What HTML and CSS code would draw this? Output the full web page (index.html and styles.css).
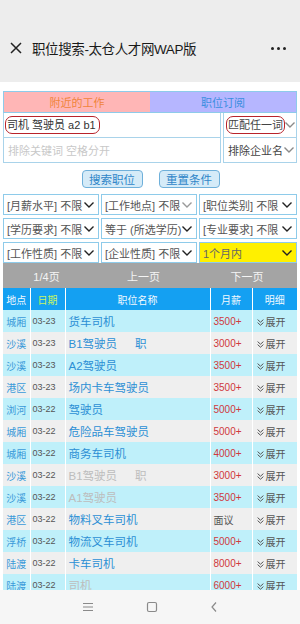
FILE: index.html
```html
<!DOCTYPE html>
<html lang="zh-CN">
<head>
<meta charset="utf-8">
<title>职位搜索-太仓人才网WAP版</title>
<link rel="stylesheet" href="styles.css">
</head>
<body>
<header class="topbar">
  <svg class="close" width="12" height="12" viewBox="0 0 12 12"><path d="M1 1L11 11M11 1L1 11" stroke="#222" stroke-width="1.5" fill="none"/></svg>
  <span class="title">职位搜索-太仓人才网WAP版</span>
  <span class="more"><i></i><i></i><i></i></span>
</header>

<main class="page">
  <nav class="tabs">
    <div class="tab tab-near">附近的工作</div>
    <div class="tab tab-sub">职位订阅</div>
  </nav>

  <section class="search">
    <div class="field"><span class="ring">司机 驾驶员 a2 b1</span></div>
    <div class="sel light"><span class="ring">匹配任一词</span><svg class="chev" viewBox="0 0 10 6"><path d="M0.5 0.5L5 5L9.5 0.5"/></svg></div>
    <div class="field placeholder">排除关键词 空格分开</div>
    <div class="sel light"><span>排除企业名</span><svg class="chev" viewBox="0 0 10 6"><path d="M0.5 0.5L5 5L9.5 0.5"/></svg></div>
  </section>

  <div class="buttons">
    <span class="btn">搜索职位</span>
    <span class="btn">重置条件</span>
  </div>

  <section class="filters">
    <div class="fsel"><span>[月薪水平] 不限</span><svg class="chev" viewBox="0 0 10 6"><path d="M0.5 0.5L5 5L9.5 0.5"/></svg></div>
    <div class="fsel faint"><span>[工作地点] 不限</span><svg class="chev" viewBox="0 0 10 6"><path d="M0.5 0.5L5 5L9.5 0.5"/></svg></div>
    <div class="fsel"><span>[职位类别] 不限</span><svg class="chev" viewBox="0 0 10 6"><path d="M0.5 0.5L5 5L9.5 0.5"/></svg></div>
    <div class="fsel"><span>[学历要求] 不限</span><svg class="chev" viewBox="0 0 10 6"><path d="M0.5 0.5L5 5L9.5 0.5"/></svg></div>
    <div class="fsel"><span>等于 (所选学历)</span><svg class="chev" viewBox="0 0 10 6"><path d="M0.5 0.5L5 5L9.5 0.5"/></svg></div>
    <div class="fsel"><span>[专业要求] 不限</span><svg class="chev" viewBox="0 0 10 6"><path d="M0.5 0.5L5 5L9.5 0.5"/></svg></div>
    <div class="fsel"><span>[工作性质] 不限</span><svg class="chev" viewBox="0 0 10 6"><path d="M0.5 0.5L5 5L9.5 0.5"/></svg></div>
    <div class="fsel"><span>[企业性质] 不限</span><svg class="chev" viewBox="0 0 10 6"><path d="M0.5 0.5L5 5L9.5 0.5"/></svg></div>
    <div class="fsel yellow"><span>1个月内</span><svg class="chev" viewBox="0 0 10 6"><path d="M0.5 0.5L5 5L9.5 0.5"/></svg></div>
  </section>

  <div class="pager">
    <span>1/4页</span>
    <span>上一页</span>
    <span>下一页</span>
  </div>

  <table class="jobs">
    <thead>
      <tr><th>地点</th><th class="hdate">日期</th><th>职位名称</th><th>月薪</th><th>明细</th></tr>
    </thead>
    <tbody>
      <tr class="c"><td class="loc">城厢</td><td class="date">03-23</td><td class="name">货车司机</td><td class="pay">3500+</td><td class="more-c"><svg class="dbl" viewBox="0 0 7 7"><path d="M0.6 0.6L3.5 3.2L6.4 0.6M0.6 3.6L3.5 6.2L6.4 3.6"/></svg>展开</td></tr>
      <tr class="g"><td class="loc">沙溪</td><td class="date">03-23</td><td class="name">B1驾驶员<span class="gap">职</span></td><td class="pay">3000+</td><td class="more-c"><svg class="dbl" viewBox="0 0 7 7"><path d="M0.6 0.6L3.5 3.2L6.4 0.6M0.6 3.6L3.5 6.2L6.4 3.6"/></svg>展开</td></tr>
      <tr class="c"><td class="loc">沙溪</td><td class="date">03-23</td><td class="name">A2驾驶员</td><td class="pay">3500+</td><td class="more-c"><svg class="dbl" viewBox="0 0 7 7"><path d="M0.6 0.6L3.5 3.2L6.4 0.6M0.6 3.6L3.5 6.2L6.4 3.6"/></svg>展开</td></tr>
      <tr class="g"><td class="loc">港区</td><td class="date">03-23</td><td class="name">场内卡车驾驶员</td><td class="pay">3500+</td><td class="more-c"><svg class="dbl" viewBox="0 0 7 7"><path d="M0.6 0.6L3.5 3.2L6.4 0.6M0.6 3.6L3.5 6.2L6.4 3.6"/></svg>展开</td></tr>
      <tr class="c"><td class="loc">浏河</td><td class="date">03-22</td><td class="name">驾驶员</td><td class="pay">5000+</td><td class="more-c"><svg class="dbl" viewBox="0 0 7 7"><path d="M0.6 0.6L3.5 3.2L6.4 0.6M0.6 3.6L3.5 6.2L6.4 3.6"/></svg>展开</td></tr>
      <tr class="g"><td class="loc">城厢</td><td class="date">03-22</td><td class="name">危险品车驾驶员</td><td class="pay">5000+</td><td class="more-c"><svg class="dbl" viewBox="0 0 7 7"><path d="M0.6 0.6L3.5 3.2L6.4 0.6M0.6 3.6L3.5 6.2L6.4 3.6"/></svg>展开</td></tr>
      <tr class="c"><td class="loc">城厢</td><td class="date">03-22</td><td class="name">商务车司机</td><td class="pay">4000+</td><td class="more-c"><svg class="dbl" viewBox="0 0 7 7"><path d="M0.6 0.6L3.5 3.2L6.4 0.6M0.6 3.6L3.5 6.2L6.4 3.6"/></svg>展开</td></tr>
      <tr class="g"><td class="loc">沙溪</td><td class="date">03-22</td><td class="name old">B1驾驶员<span class="gap">职</span></td><td class="pay">3000+</td><td class="more-c"><svg class="dbl" viewBox="0 0 7 7"><path d="M0.6 0.6L3.5 3.2L6.4 0.6M0.6 3.6L3.5 6.2L6.4 3.6"/></svg>展开</td></tr>
      <tr class="c"><td class="loc">沙溪</td><td class="date">03-22</td><td class="name old">A1驾驶员</td><td class="pay">3500+</td><td class="more-c"><svg class="dbl" viewBox="0 0 7 7"><path d="M0.6 0.6L3.5 3.2L6.4 0.6M0.6 3.6L3.5 6.2L6.4 3.6"/></svg>展开</td></tr>
      <tr class="g"><td class="loc">港区</td><td class="date">03-22</td><td class="name">物料叉车司机</td><td class="pay nego">面议</td><td class="more-c"><svg class="dbl" viewBox="0 0 7 7"><path d="M0.6 0.6L3.5 3.2L6.4 0.6M0.6 3.6L3.5 6.2L6.4 3.6"/></svg>展开</td></tr>
      <tr class="c"><td class="loc">浮桥</td><td class="date">03-22</td><td class="name">物流叉车司机</td><td class="pay">5000+</td><td class="more-c"><svg class="dbl" viewBox="0 0 7 7"><path d="M0.6 0.6L3.5 3.2L6.4 0.6M0.6 3.6L3.5 6.2L6.4 3.6"/></svg>展开</td></tr>
      <tr class="g"><td class="loc">陆渡</td><td class="date">03-22</td><td class="name">卡车司机</td><td class="pay">8000+</td><td class="more-c"><svg class="dbl" viewBox="0 0 7 7"><path d="M0.6 0.6L3.5 3.2L6.4 0.6M0.6 3.6L3.5 6.2L6.4 3.6"/></svg>展开</td></tr>
      <tr class="c"><td class="loc">陆渡</td><td class="date">03-22</td><td class="name old">司机</td><td class="pay">6000+</td><td class="more-c"><svg class="dbl" viewBox="0 0 7 7"><path d="M0.6 0.6L3.5 3.2L6.4 0.6M0.6 3.6L3.5 6.2L6.4 3.6"/></svg>展开</td></tr>
    </tbody>
  </table>
</main>

<footer class="navbar">
  <svg class="nav-ico" width="12" height="10" viewBox="0 0 12 10"><path d="M1 1.5H11M1 5H11M1 8.5H11" stroke="#8a8a8a" stroke-width="1.1" fill="none"/></svg>
  <svg class="nav-ico" width="12" height="12" viewBox="0 0 12 12"><rect x="1.5" y="1.5" width="9" height="9" rx="1.5" stroke="#8a8a8a" stroke-width="1.2" fill="none"/></svg>
  <svg class="nav-ico" width="8" height="12" viewBox="0 0 8 12"><path d="M6 1.5L2 6L6 10.5" stroke="#8a8a8a" stroke-width="1.2" fill="none"/></svg>
</footer>
</body>
</html>
```

FILE: styles.css
```css
* { box-sizing: border-box; }
html, body { margin: 0; padding: 0; }
body {
  width: 300px;
  height: 624px;
  overflow: hidden;
  background: #fff;
  font-family: "Liberation Sans", "Noto Sans CJK SC", sans-serif;
  color: #333;
}

.topbar {
  height: 82px;
  background: #ededed;
  display: flex;
  align-items: center;
  padding: 14px 14px 0 10px;
}
.close { flex: none; }
.title {
  margin-left: 10px;
  font-size: 13.5px;
  color: #1a1a1a;
  flex: 1;
  letter-spacing: -0.4px;
}
.more { display: flex; gap: 3px; }
.more i { width: 3px; height: 3px; border-radius: 50%; background: #222; display: block; }

.page { padding: 9px 3px 0; }

.tabs {
  display: grid;
  grid-template-columns: 1fr 1fr;
  height: 22px;
  border: 1px solid #8ecbea;
  font-size: 11px;
}
.tab { display: flex; align-items: center; justify-content: center; }
.tab-near { background: #ffb6b6; color: #f0843a; }
.tab-sub { background: #b6b6ff; color: #3a8ee0; }

.search {
  display: grid;
  grid-template-columns: 218px 1fr;
  grid-auto-rows: 25px;
  column-gap: 2px;
  font-size: 11px;
}
.field {
  border: 1px solid #a9d3ea;
  border-top: none;
  display: flex;
  align-items: center;
  padding-left: 1px;
  color: #333;
  white-space: nowrap;
}
.placeholder { color: #c8c8c8; padding-left: 4px; }
.ring {
  border: 1.3px solid #b8232b;
  border-radius: 7px;
  padding: 1px 3px 1px 1px;
  line-height: 14px;
  white-space: nowrap;
}
.sel {
  border: 1px solid #a9d3ea;
  border-top: none;
  display: flex;
  align-items: center;
  justify-content: space-between;
  padding: 0 2px 0 2px;
  color: #444;
  white-space: nowrap;
  overflow: hidden;
}
.sel > span:not(.ring) { padding-left: 2px; }
.sel .ring { padding: 1px 1px; }
.sel.light .chev { stroke: #8a8a8a; }

.chev {
  width: 10px;
  height: 6px;
  fill: none;
  stroke: #222;
  stroke-width: 1.4;
  flex: none;
}

.buttons {
  display: flex;
  justify-content: center;
  gap: 16px;
  margin: 7px 0 6px;
  padding-left: 1px;
}
.btn {
  height: 18px;
  width: 61px;
  background: #d5ebf8;
  border: 1px solid #6fb0da;
  border-radius: 4px;
  color: #2f86c8;
  font-size: 11.5px;
  display: flex;
  align-items: center;
  justify-content: center;
}

.filters {
  display: grid;
  grid-template-columns: 96px 96px 1fr;
  grid-auto-rows: 21px;
  gap: 3px 2px;
  font-size: 11px;
}
.fsel {
  border: 1px solid #8ecbea;
  display: flex;
  align-items: center;
  justify-content: space-between;
  padding: 0 4px 0 3px;
  color: #555;
  white-space: nowrap;
  overflow: hidden;
}
.fsel.faint .chev { stroke: #9a9a9a; }
.fsel.yellow { background: #fff000; color: #666; }

.pager {
  margin-top: 0;
  height: 25px;
  background: #a4a4a4;
  display: grid;
  grid-template-columns: 87px 107px 1fr;
  align-items: center;
  text-align: center;
  color: #f4f4f4;
  font-size: 11px;
}

.jobs {
  width: 294px;
  border-collapse: collapse;
  table-layout: fixed;
}
.jobs th, .jobs td {
  height: 22px;
  padding: 0;
  border-left: 1px solid #fff;
  border-right: 1px solid #fff;
  white-space: nowrap;
  overflow: hidden;
}
.jobs th:first-child, .jobs td:first-child { border-left: none; }
.jobs th:last-child, .jobs td:last-child { border-right: none; }
.jobs th {
  background: #14a0f2;
  color: #f2f9ff;
  font-weight: normal;
  font-size: 10px;
}
.jobs th:nth-child(1) { width: 27px; }
.jobs th:nth-child(2) { width: 35px; }
.jobs th:nth-child(3) { width: 145px; }
.jobs th:nth-child(4) { width: 42px; }
.jobs th:nth-child(5) { width: 45px; }
.jobs th.hdate { color: #c6f462; }

.jobs tr.c td { background: #bff0fa; }
.jobs tr.g td { background: #efefef; }

.loc { font-size: 10px; color: #3a9ad9; text-align: center; }
.date { font-size: 9px; color: #555; padding-left: 2px !important; }
.name { font-size: 11.5px; color: #2c8fd5; padding-left: 3px !important; }
.name.old { color: #bdbdbd; }
.gap { margin-left: 18px; }
.pay { font-size: 10px; color: #d0383c; padding-left: 3px !important; }
.pay.nego { color: #555; }
.more-c { font-size: 10px; color: #555; padding-left: 4px !important; }
.dbl {
  width: 7px;
  height: 7px;
  fill: none;
  stroke: #555;
  stroke-width: 1;
  margin-right: 2px;
  vertical-align: 0px;
}

.navbar {
  position: fixed;
  left: 0;
  right: 0;
  bottom: 0;
  height: 34px;
  background: #f6f6f6;
  display: flex;
  align-items: center;
  justify-content: center;
  gap: 52px;
}
```
